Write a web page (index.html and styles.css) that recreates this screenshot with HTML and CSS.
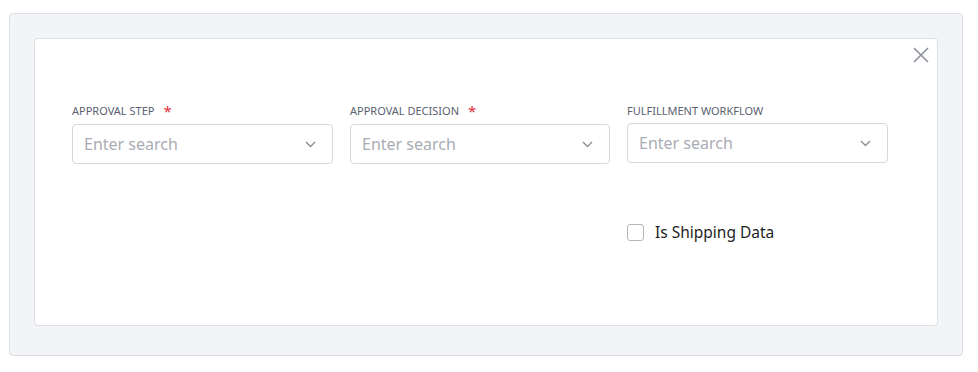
FILE: index.html
```html
<!DOCTYPE html>
<html>
<head>
<meta charset="utf-8">
<link rel="stylesheet" href="styles.css">
</head>
<body>
<div class="outer">
  <div class="card">
    <button class="close" aria-label="Close">
      <svg width="16" height="16" viewBox="0 0 16 16"><path d="M1 1L15 15M15 1L1 15" stroke="#8b9098" stroke-width="1.6" fill="none"/></svg>
    </button>
    <div class="fields">
      <div class="field">
        <label class="label">APPROVAL STEP <span class="req">*</span></label>
        <div class="select"><span class="ph">Enter search</span>
          <svg class="chev" width="11" height="7" viewBox="0 0 11 7"><path d="M1 1L5.5 5.5L10 1" stroke="#8a8f96" stroke-width="1.4" fill="none"/></svg>
        </div>
      </div>
      <div class="field">
        <label class="label">APPROVAL DECISION <span class="req">*</span></label>
        <div class="select"><span class="ph">Enter search</span>
          <svg class="chev" width="11" height="7" viewBox="0 0 11 7"><path d="M1 1L5.5 5.5L10 1" stroke="#8a8f96" stroke-width="1.4" fill="none"/></svg>
        </div>
      </div>
      <div class="field">
        <label class="label short">FULFILLMENT WORKFLOW</label>
        <div class="select"><span class="ph">Enter search</span>
          <svg class="chev" width="11" height="7" viewBox="0 0 11 7"><path d="M1 1L5.5 5.5L10 1" stroke="#8a8f96" stroke-width="1.4" fill="none"/></svg>
        </div>
      </div>
      <div class="field"></div>
      <div class="field"></div>
      <div class="field check-field">
        <label class="check"><span class="box"></span>Is Shipping Data</label>
      </div>
    </div>
  </div>
</div>
</body>
</html>
```
FILE: styles.css
```css
* { box-sizing: border-box; }
body {
  margin: 0;
  background: #ffffff;
  font-family: "Noto Sans", "Open Sans", sans-serif;
}
.outer {
  margin: 13px 15px 16px 9px;
  height: 343px;
  border: 1px solid #dcdde6;
  border-radius: 4px;
  background: #f3f4f6;
  padding: 24px 24px 29px 24px;
}
.card {
  position: relative;
  height: 288px;
  background: #ffffff;
  border: 1px solid #dcdde6;
  border-radius: 4px;
  padding: 64px 37px 0 37px;
}
.close {
  position: absolute;
  top: 8px;
  right: 8px;
  border: 0;
  background: transparent;
  padding: 0;
  width: 16px;
  height: 16px;
  cursor: pointer;
}
.close svg { display: block; }
.fields {
  display: grid;
  grid-template-columns: 261px 260px 261px;
  column-gap: 17px;
  row-gap: 0;
}
.label {
  display: flex;
  align-items: center;
  height: 14px;
  font-size: 11px;
  color: #5b6170;
  margin-bottom: 7px;
}
.label.short { margin-bottom: 6px; }
.req {
  color: #e0303c;
  font-size: 15px;
  margin-left: 9px;
  line-height: 1;
  position: relative;
  top: 1px;
}
.select {
  height: 40px;
  border: 1px solid #d6d8dd;
  border-radius: 4px;
  display: flex;
  align-items: center;
  justify-content: space-between;
  padding: 0 16px 0 11px;
  background: #fff;
}
.ph {
  font-size: 16px;
  color: #a9adb4;
}
.chev { display: block; }
.check-field { margin-top: 57px; }
.check {
  display: flex;
  align-items: center;
  font-size: 15.5px;
  color: #1d1f24;
}
.box {
  width: 17px;
  height: 17px;
  border: 1px solid #b4b7bc;
  border-radius: 3px;
  margin-right: 11px;
  background: #fff;
}
```
